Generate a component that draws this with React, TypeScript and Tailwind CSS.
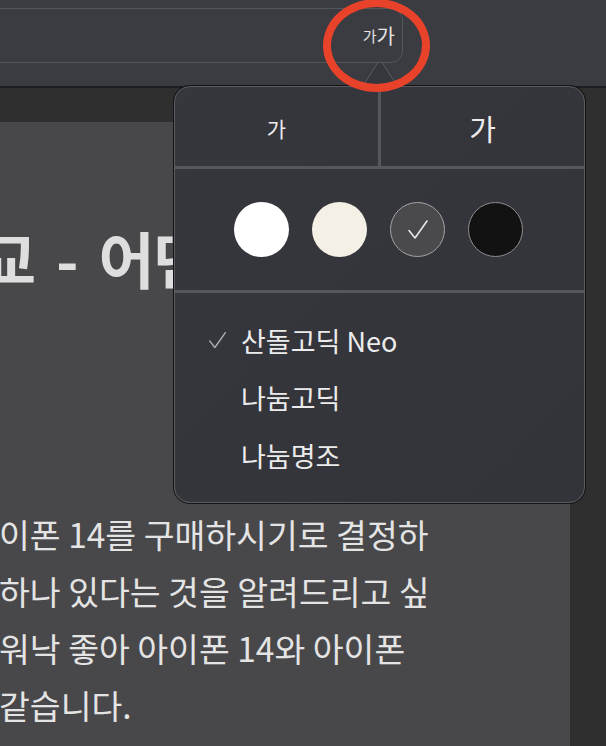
const font = { fontFamily: '"Noto Sans CJK KR", "Noto Sans", sans-serif' };

const swatches = [
  { key: "white", className: "bg-white" },
  { key: "sepia", className: "bg-[#f5f0e6]" },
  { key: "gray", className: "bg-[#4a4a4d] border-[1.5px] border-[#a3a3a6]", checked: true },
  { key: "black", className: "bg-[#121212] border-[1.5px] border-[#8e8e90]" },
];

const fonts = [
  { label: "산돌고딕 Neo", checked: true },
  { label: "나눔고딕" },
  { label: "나눔명조" },
];

const Check = ({ className }: { className?: string }) => (
  <svg viewBox="0 0 24 24" className={className} fill="none" stroke="currentColor" strokeWidth="1.6" strokeLinecap="round" strokeLinejoin="round">
    <polyline points="3,12.5 9,20 21,3" />
  </svg>
);

const Popover = () => (
  <div className="absolute left-[174px] top-[86px] w-[411px] h-[417px] z-10">
    <div className="relative h-full rounded-[16px] border border-[#5b5c62] bg-gradient-to-br from-[#36373d] to-[#333439] shadow-[0_0_0_1px_#141414] overflow-hidden flex flex-col">
      <div className="flex h-[82px] border-b-[3px] border-[#56575d]">
        <div className="flex-1 flex items-center justify-center pt-[5px] text-[21px] text-[#ececec] border-r-[3px] border-[#56575d]">가</div>
        <div className="flex-1 flex items-center justify-center pt-[5px] text-[29px] text-[#ececec]">가</div>
      </div>
      <div className="flex h-[124px] items-center justify-center gap-[23px] border-b-[3px] border-[#56575d] pr-[2px]">
        {swatches.map((s) => (
          <div key={s.key} className={`w-[55px] h-[55px] rounded-full flex items-center justify-center ${s.className}`}>
            {s.checked && <Check className="w-[24px] h-[24px] text-[#e8e8e8]" />}
          </div>
        ))}
      </div>
      <div className="flex flex-col pt-[19px] pl-[32px]">
        {fonts.map((f) => (
          <div key={f.label} className="flex items-center h-[57.5px] text-[27px] text-[#ececec]">
            <div className="w-[34px]">
              {f.checked && <Check className="w-[21px] h-[21px] text-[#aeaeb2]" />}
            </div>
            <span>{f.label}</span>
          </div>
        ))}
      </div>
    </div>
    {/* arrow */}
    <svg className="absolute left-[188px] top-[-25px]" width="36" height="27" viewBox="0 0 36 27">
      <path d="M0 26 L15.5 2.2 Q18 -0.6 20.5 2.2 L36 26 Z" fill="#36373d" />
      <path d="M0.5 25.5 L15.5 2.2 Q18 -0.6 20.5 2.2 L35.5 25.5" fill="none" stroke="#5b5c62" strokeWidth="1" />
    </svg>
  </div>
);

export default function App() {
  return (
    <div className="relative w-[606px] h-[746px] overflow-hidden bg-[#2f2f2f]" style={font}>
      {/* toolbar */}
      <div className="h-[88px] bg-[#3b3c41] border-b-[2px] border-[#1d1d1f] pt-[8px]">
        <div className="-ml-[20px] w-[423px] h-[55px] rounded-[12px] border border-[#55565b] flex items-center justify-end pr-[7px]">
          <span className="text-[15px] text-[#e4e4e4] leading-none">가</span>
          <span className="text-[20px] text-[#e4e4e4] leading-none">가</span>
        </div>
      </div>

      {/* page */}
      <div className="flex pt-[34px]">
        <div className="w-[570px] h-[640px] overflow-hidden bg-[#48484a] text-[#e4e4e4]">
          <h1 className="mt-[103px] -ml-[20px] whitespace-nowrap text-[61px] leading-[66px] font-bold text-[#dedede] [word-spacing:6px]">
            교 - 어떤
          </h1>
          <div className="mt-[214px] -ml-[1px] text-[33.5px] leading-[57px] whitespace-nowrap">
            <p>이폰 14를 구매하시기로 결정하</p>
            <p>하나 있다는 것을 알려드리고 싶</p>
            <p>워낙 좋아 아이폰 14와 아이폰</p>
            <p>같습니다.</p>
          </div>
        </div>
      </div>

      <Popover />

      {/* annotation */}
      <div className="absolute left-[323px] top-[-1px] w-[107px] h-[93px] rounded-[50%] border-[8px] border-[#e8422b] z-20" />
    </div>
  );
}
